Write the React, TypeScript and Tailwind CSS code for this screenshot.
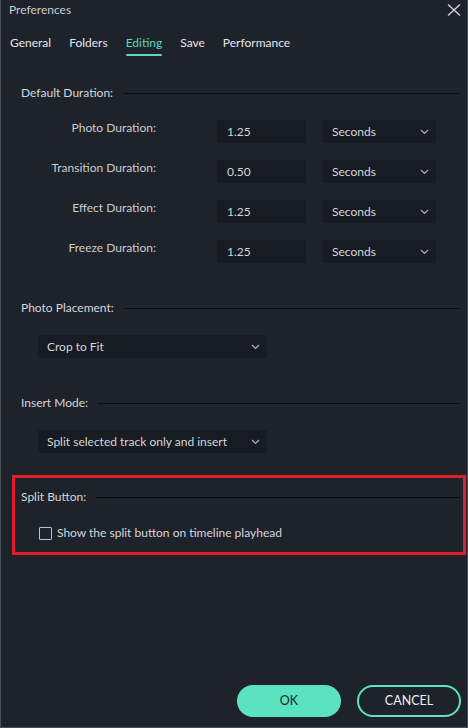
import React from 'react';

const tabs = ['General', 'Folders', 'Editing', 'Save', 'Performance'];

const durations = [
  { label: 'Photo Duration:', value: '1.25' },
  { label: 'Transition Duration:', value: '0.50' },
  { label: 'Effect Duration:', value: '1.25' },
  { label: 'Freeze Duration:', value: '1.25' },
];

function Chevron() {
  return (
    <svg width="9" height="6" viewBox="0 0 9 6" className="shrink-0">
      <polyline points="1,1 4.5,4.5 8,1" fill="none" stroke="#aeb3ba" strokeWidth="1.2" />
    </svg>
  );
}

// 섹션 제목 + 가로줄
function Heading({ text }: { text: string }) {
  return (
    <div className="flex items-center gap-[10px] h-[16px]">
      <span className="leading-[16px] whitespace-nowrap text-[#d3d6db]">{text}</span>
      <div className="flex-1 h-px bg-[#0b0e13]" />
    </div>
  );
}

function Select({ text, className }: { text: string; className: string }) {
  return (
    <div className={`h-[23px] bg-[#171b22] flex items-center justify-between pl-[9px] pr-[7px] ${className}`}>
      <span className="leading-[16px] text-[#d3d6db] whitespace-nowrap">{text}</span>
      <Chevron />
    </div>
  );
}

export default function App() {
  return (
    <div
      className="w-[468px] h-[728px] bg-[#1e232b] border-l border-r border-b border-[#4a4f57] flex flex-col text-[12px] text-[#d3d6db]"
      style={{ fontFamily: 'Lato, "Noto Sans", sans-serif' }}
    >
      {/* 타이틀 바 */}
      <div className="h-[19px] flex items-center justify-between pl-[8px] pr-[6px]">
        <span className="text-[12px] leading-[16px] text-[#c9ccd1]">Preferences</span>
        <svg width="14" height="12" viewBox="0 0 14 12">
          <path d="M1 0.5 L13 11.5 M13 0.5 L1 11.5" stroke="#d6d9de" strokeWidth="1.3" />
        </svg>
      </div>

      {/* 탭 */}
      <div className="flex gap-[18px] pl-[9px] mt-[15px]">
        {tabs.map((t) => (
          <div key={t} className="flex flex-col">
            <span
              className={`text-[12px] leading-[18px] whitespace-nowrap ${
                t === 'Editing' ? 'text-[#5cd8bd]' : 'text-[#e4e6ea]'
              }`}
            >
              {t}
            </span>
            <div className={`h-[2px] mt-[2px] rounded-full ${t === 'Editing' ? 'bg-[#5cd8bd]' : 'bg-transparent'}`} />
          </div>
        ))}
      </div>

      {/* Default Duration */}
      <div className="pl-[20px] pr-[7px] mt-[29px]">
        <Heading text="Default Duration:" />
      </div>
      <div className="flex flex-col gap-[17px] mt-[19px] pl-[21px]">
        {durations.map((d) => (
          <div key={d.label} className="flex items-start">
            <span className="w-[134px] text-right leading-[16px] text-[#c9ccd1] whitespace-nowrap">{d.label}</span>
            <div className="ml-[61px] w-[89px] h-[23px] bg-[#171b22] flex items-center pl-[10px]">
              <span className="leading-[16px] text-[#d3d6db]">{d.value}</span>
            </div>
            <Select text="Seconds" className="ml-[17px] w-[113px]" />
          </div>
        ))}
      </div>

      {/* Photo Placement */}
      <div className="pl-[20px] pr-[7px] mt-[37px]">
        <Heading text="Photo Placement:" />
      </div>
      <div className="pl-[37px] mt-[19px]">
        <Select text="Crop to Fit" className="w-[229px]" />
      </div>

      {/* Insert Mode */}
      <div className="pl-[20px] pr-[7px] mt-[37px]">
        <Heading text="Insert Mode:" />
      </div>
      <div className="pl-[37px] mt-[19px]">
        <Select text="Split selected track only and insert" className="w-[229px]" />
      </div>

      {/* Split Button (빨간 강조 박스) */}
      <div className="ml-[11px] mr-[1px] mt-[22px] border-[3px] border-[#e11f2b] pt-[11px] pb-[11px] pl-[6px] pr-[3px]">
        <Heading text="Split Button:" />
        <div className="flex items-center mt-[20px] pl-[18px] h-[16px]">
          <div className="w-[13px] h-[13px] border border-[#bfc3c9] rounded-[1px]" />
          <span className="ml-[5px] leading-[16px] text-[#d3d6db] whitespace-nowrap">
            Show the split button on timeline playhead
          </span>
        </div>
      </div>

      <div className="flex-1" />

      {/* 하단 버튼 */}
      <div className="flex justify-end gap-[16px] pr-[6px] pb-[10px]">
        <button className="w-[104px] h-[32px] rounded-full bg-[#5be3c1] text-[#1b1f26] text-[12.5px]">
          OK
        </button>
        <button className="w-[104px] h-[32px] rounded-full border-2 border-[#5be3c1] text-[#eef0f2] text-[12.5px]">
          CANCEL
        </button>
      </div>
    </div>
  );
}
